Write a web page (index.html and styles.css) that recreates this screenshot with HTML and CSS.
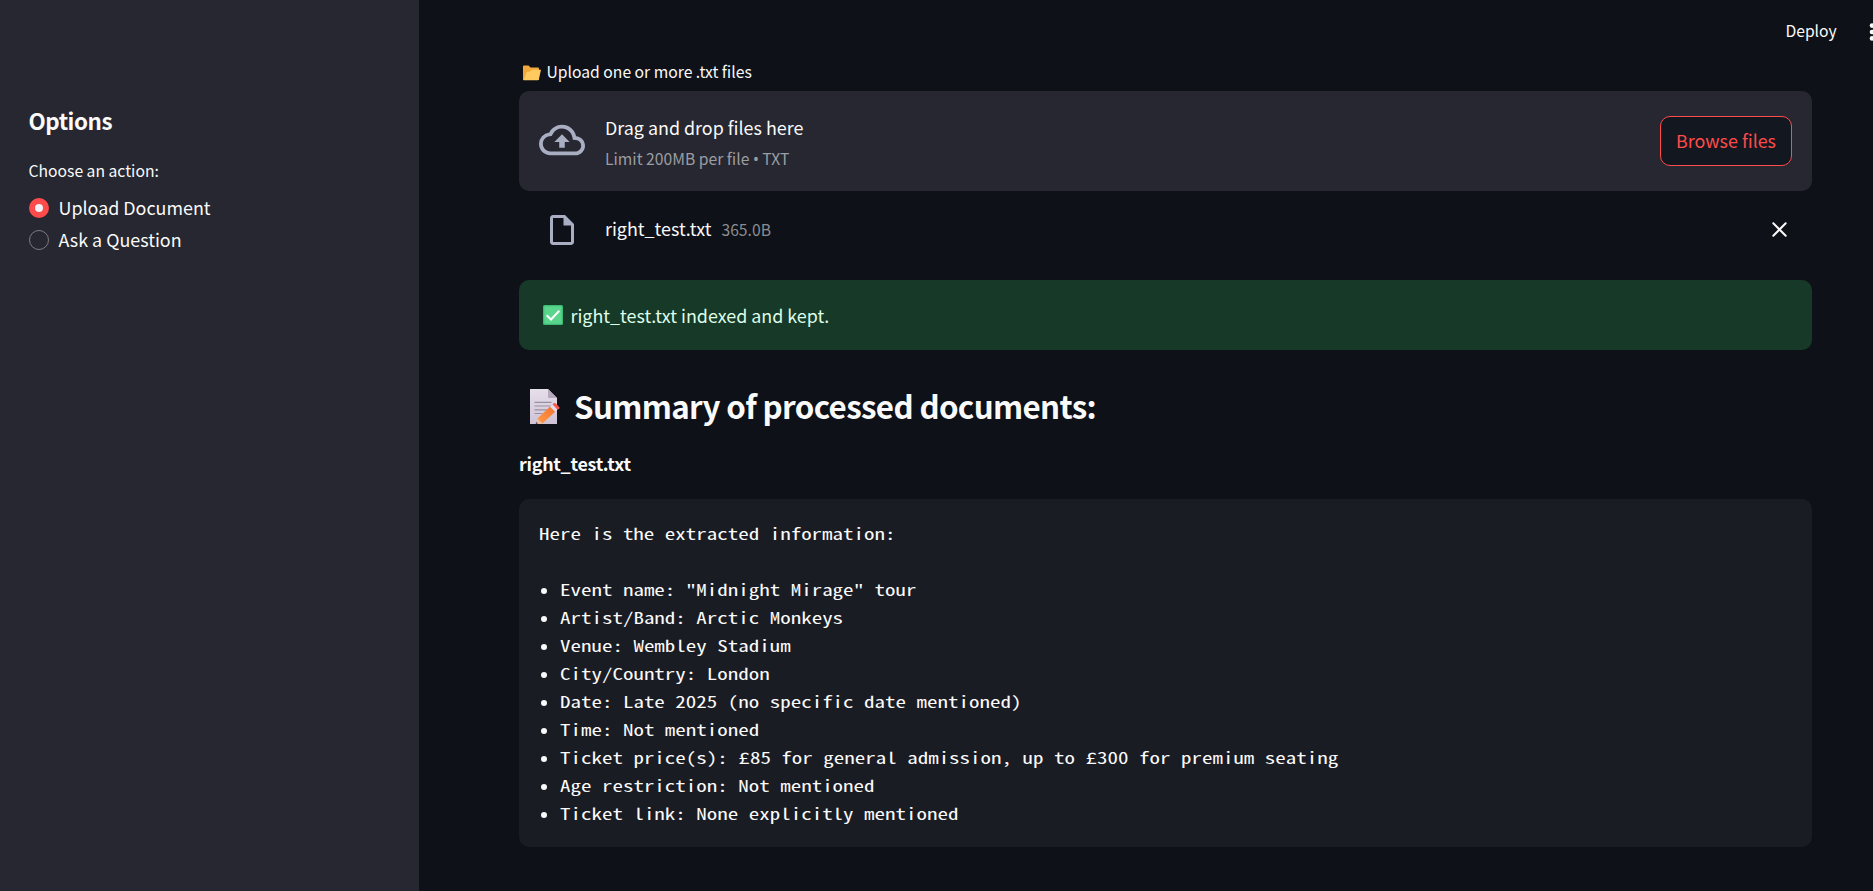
FILE: index.html
```html
<!DOCTYPE html>
<html lang="en">
<head>
<meta charset="utf-8">
<title>Upload Document</title>
<link rel="stylesheet" href="styles.css">
</head>
<body>
<div class="app">
  <aside class="sidebar">
    <h2 class="sidebar-title">Options</h2>
    <p class="sidebar-label">Choose an action:</p>
    <div class="radio"><span class="dot dot-on"></span><span class="radio-text">Upload Document</span></div>
    <div class="radio"><span class="dot"></span><span class="radio-text">Ask a Question</span></div>
  </aside>
  <main class="main">
    <header class="toolbar">
      <span class="deploy">Deploy</span>
      <svg class="kebab" width="6" height="20" viewBox="0 0 6 20"><g fill="#fafafa"><circle cx="3" cy="3.6" r="2.3"/><circle cx="3" cy="10" r="2.3"/><circle cx="3" cy="16.400" r="2.3"/></g></svg>
    </header>
    <div class="content">
      <div class="upload-label">
        <svg class="folder" width="18" height="16" viewBox="0 0 18 16"><path d="M0 1.500Q0 .5 1 .5h4.500l2 2H15q1 0 1 1V15H0z" fill="#f2a93b"/><path d="M.5 15.200 3.800 7l3.400-.4 1.600-1.800h9.200L15.900 14.200q-.2 1-1.200 1z" fill="#ffca5f"/></svg>
        <span>Upload one or more .txt files</span>
      </div>
      <section class="dropzone">
        <svg class="cloud" width="46" height="46" viewBox="0 0 24 24" fill="#a9aec2"><path d="M19.350 10.040A7.490 7.490 0 0 0 12 4C9.110 4 6.600 5.640 5.350 8.040A5.994 5.994 0 0 0 0 14c0 3.310 2.690 6 6 6h13c2.760 0 5-2.240 5-5 0-2.640-2.050-4.780-4.650-4.960zM19 18H6c-2.210 0-4-1.790-4-4 0-2.050 1.530-3.760 3.560-3.970l1.070-.11.500-.95A5.469 5.469 0 0 1 12 6c2.620 0 4.880 1.860 5.390 4.430l.300 1.500 1.530.11A2.980 2.980 0 0 1 22 15c0 1.650-1.350 3-3 3zM8 13h2.550v3h2.900v-3H16l-4-4z"/></svg>
        <div class="drop-text">
          <span class="drop-title">Drag and drop files here</span>
          <span class="drop-limit">Limit 200MB per file <span class="sep">•</span> TXT</span>
        </div>
        <button class="browse">Browse files</button>
      </section>
      <div class="file-row">
        <svg class="file-icon" width="36" height="36" viewBox="0 0 24 24" fill="#a9aec2"><path d="M14 2H6c-1.100 0-1.990.9-1.990 2L4 20c0 1.100.89 2 1.990 2H18c1.100 0 2-.9 2-2V8l-6-6zM6 20V4h7v5h5v11H6z"/></svg>
        <span class="file-name">right_test.txt</span>
        <span class="file-size">365.0B</span>
        <svg class="close" width="15" height="15" viewBox="0 0 15 15"><path d="M1.300 1.300 13.700 13.700M13.700 1.300 1.300 13.700" stroke="#fafafa" stroke-width="2" stroke-linecap="round"/></svg>
      </div>
      <div class="alert">
        <svg width="20" height="20" viewBox="0 0 20 20"><rect width="20" height="20" rx="1.500" fill="#3dbb74"/><rect x="1.300" y="1.300" width="17.400" height="17.400" rx="1" fill="#5ad58e"/><path d="m3.700 10.300 4.300 4.200 8.300-8.700" fill="none" stroke="#fff" stroke-width="2"/></svg>
        <span class="alert-text">right_test.txt indexed and kept.</span>
      </div>
      <h3 class="summary">
        <svg width="30" height="35" viewBox="0 0 30 35"><defs><linearGradient id="paper" x1="0" y1="0" x2="0" y2="1"><stop offset="0" stop-color="#e6dfeb"/><stop offset="1" stop-color="#cfc3d6"/></linearGradient><linearGradient id="pencil" x1="1" y1="0" x2="0" y2="1"><stop offset="0" stop-color="#f4752e"/><stop offset="1" stop-color="#ff9a4a"/></linearGradient></defs><path d="M0 0h18l9 9v26H0z" fill="url(#paper)"/><path d="M18 0l9 9h-9z" fill="#b7a9bd"/><path d="M4.500 13.300h17M4.500 17h17M4.500 20.800h13M4.500 24.500h8" stroke="#99909f" stroke-width="1.200"/><path d="M6 35l1.800-6 5.200 5.200z" fill="#ecc19b"/><path d="M5.700 35l.6-2 1.600 1.600z" fill="#59364b"/><path d="M7.500 29.500 20 17.500l5.200 5.200L12.500 34.500z" fill="url(#pencil)"/><path d="M20 17.500l2.500-2.300 5 5.200-2.300 2.300z" fill="#e5dcea"/><path d="M22.500 15.200l1.300-1q1-.7 2 .2l3.400 3.500q.9 1-.1 1.900l-1.600 1z" fill="#f8584e"/></svg>
        <span class="summary-text">Summary of processed documents:</span>
      </h3>
      <p class="doc-name">right_test.txt</p>
      <div class="code">
        <p><span class="mono">Here is the extracted information:</span></p>
        <ul>
          <li><span class="mono">Event name: "Midnight Mirage" tour</span></li>
          <li><span class="mono">Artist/Band: Arctic Monkeys</span></li>
          <li><span class="mono">Venue: Wembley Stadium</span></li>
          <li><span class="mono">City/Country: London</span></li>
          <li><span class="mono">Date: Late 2025 (no specific date mentioned)</span></li>
          <li><span class="mono">Time: Not mentioned</span></li>
          <li><span class="mono">Ticket price(s): £85 for general admission, up to £300 for premium seating</span></li>
          <li><span class="mono">Age restriction: Not mentioned</span></li>
          <li><span class="mono">Ticket link: None explicitly mentioned</span></li>
        </ul>
      </div>
    </div>
  </main>
</div>
</body>
</html>
```
FILE: styles.css
```css
* { box-sizing: border-box; margin: 0; padding: 0; }
body {
  height: 891px;
  overflow: hidden;
  background: #0e1117;
  color: #fafafa;
  font: 17.9px/32px "Noto Sans CJK SC", "Noto Sans", sans-serif;
}
svg { display: block; flex: none; }
span { white-space: nowrap; }
.app { display: flex; height: 891px; }
.sidebar { width: 419px; flex: none; padding: 104px 28.500px 0; background: #262730; }
.sidebar-title { font-size: 22.4px; line-height: 32px; font-weight: 700; letter-spacing: -0.45px; }
.sidebar-label { margin-top: 19px; font-size: 15.7px; line-height: 32px; }
.radio { display: flex; align-items: center; gap: 10px; height: 32px; }
.radio-text { padding-bottom: 2px; }
.sidebar-label + .radio { margin-top: 5px; }
.dot { width: 20px; height: 20px; flex: none; border: 1px solid #7b7c83; border-radius: 50%; }
.dot-on { border: 6.500px solid #ff4b4b; background: #f0f2f6; }
.main { flex: 1; min-width: 0; overflow: hidden; }
.toolbar { display: flex; justify-content: flex-end; align-items: center; height: 56px; padding-top: 7px; gap: 32.300px; margin-right: -2px; }
.deploy { padding-bottom: 2px; font-size: 15.7px; }
.content { width: 1293px; margin-left: 100px; }
.upload-label { display: flex; align-items: center; gap: 5.500px; height: 32px; padding-left: 4px; font-size: 15.7px; }
.folder { margin-top: 1px; }
.dropzone { display: flex; align-items: center; height: 99.300px; margin-top: 3.400px; padding: 0 20px; border-radius: 10px; background: #262730; }
.cloud { margin-bottom: 2px; }
.drop-text { display: flex; flex-direction: column; flex: 1; margin-left: 20px; padding-top: 1px; }
.drop-title { line-height: 32px; }
.drop-limit { padding-top: 2px; font-size: 15.7px; line-height: 28px; color: #9c9da2; }
.sep { font-family: "Noto Sans", sans-serif; line-height: 1; }
.browse { width: 132px; height: 50px; padding-bottom: 2px; border: 1px solid #ff4b4b; border-radius: 10px; background: #13171f; color: #ff4b4b; font: inherit; }
.file-row { display: flex; align-items: center; height: 50px; margin-top: 14.300px; padding: 0 25px; }
.file-name { margin-left: 25px; padding-bottom: 4px; }
.file-size { margin-left: 10px; padding-top: 1px; font-size: 15.7px; color: #8b8c91; }
.close { margin-left: auto; }
.alert { display: flex; align-items: center; gap: 7.500px; height: 70px; margin-top: 25.500px; padding: 0 24px; border-radius: 10px; background: #173928; color: #dffde9; }
.alert-text { padding-bottom: 1px; }
.summary { display: flex; align-items: center; gap: 14px; height: 50px; margin-top: 31.200px; padding-left: 11px; font-size: 31.3px; font-weight: 700; }
.summary-text { padding-bottom: 1px; letter-spacing: -0.64px; }
.doc-name { margin-top: 15.500px; font-weight: 700; line-height: 32px; letter-spacing: -0.26px; }
.code { height: 348px; margin-top: 19.800px; padding: 21px 20px 19px; border-radius: 10px; background: #1a1c24; line-height: 28px; }
.code p { display: flex; height: 28px; }
.code ul { margin-top: 28px; list-style: none; }
.code li { display: flex; align-items: center; height: 28px; }
.code li::before { content: ""; width: 6px; height: 6px; margin: 2px 13px 0 2px; border-radius: 50%; background: #fafafa; }
.mono { display: block; height: 28px; font: 15.75px/28px "Noto Sans Mono CJK SC", "Liberation Mono", monospace; transform: scaleX(1.3315); transform-origin: 0 50%; }
```
